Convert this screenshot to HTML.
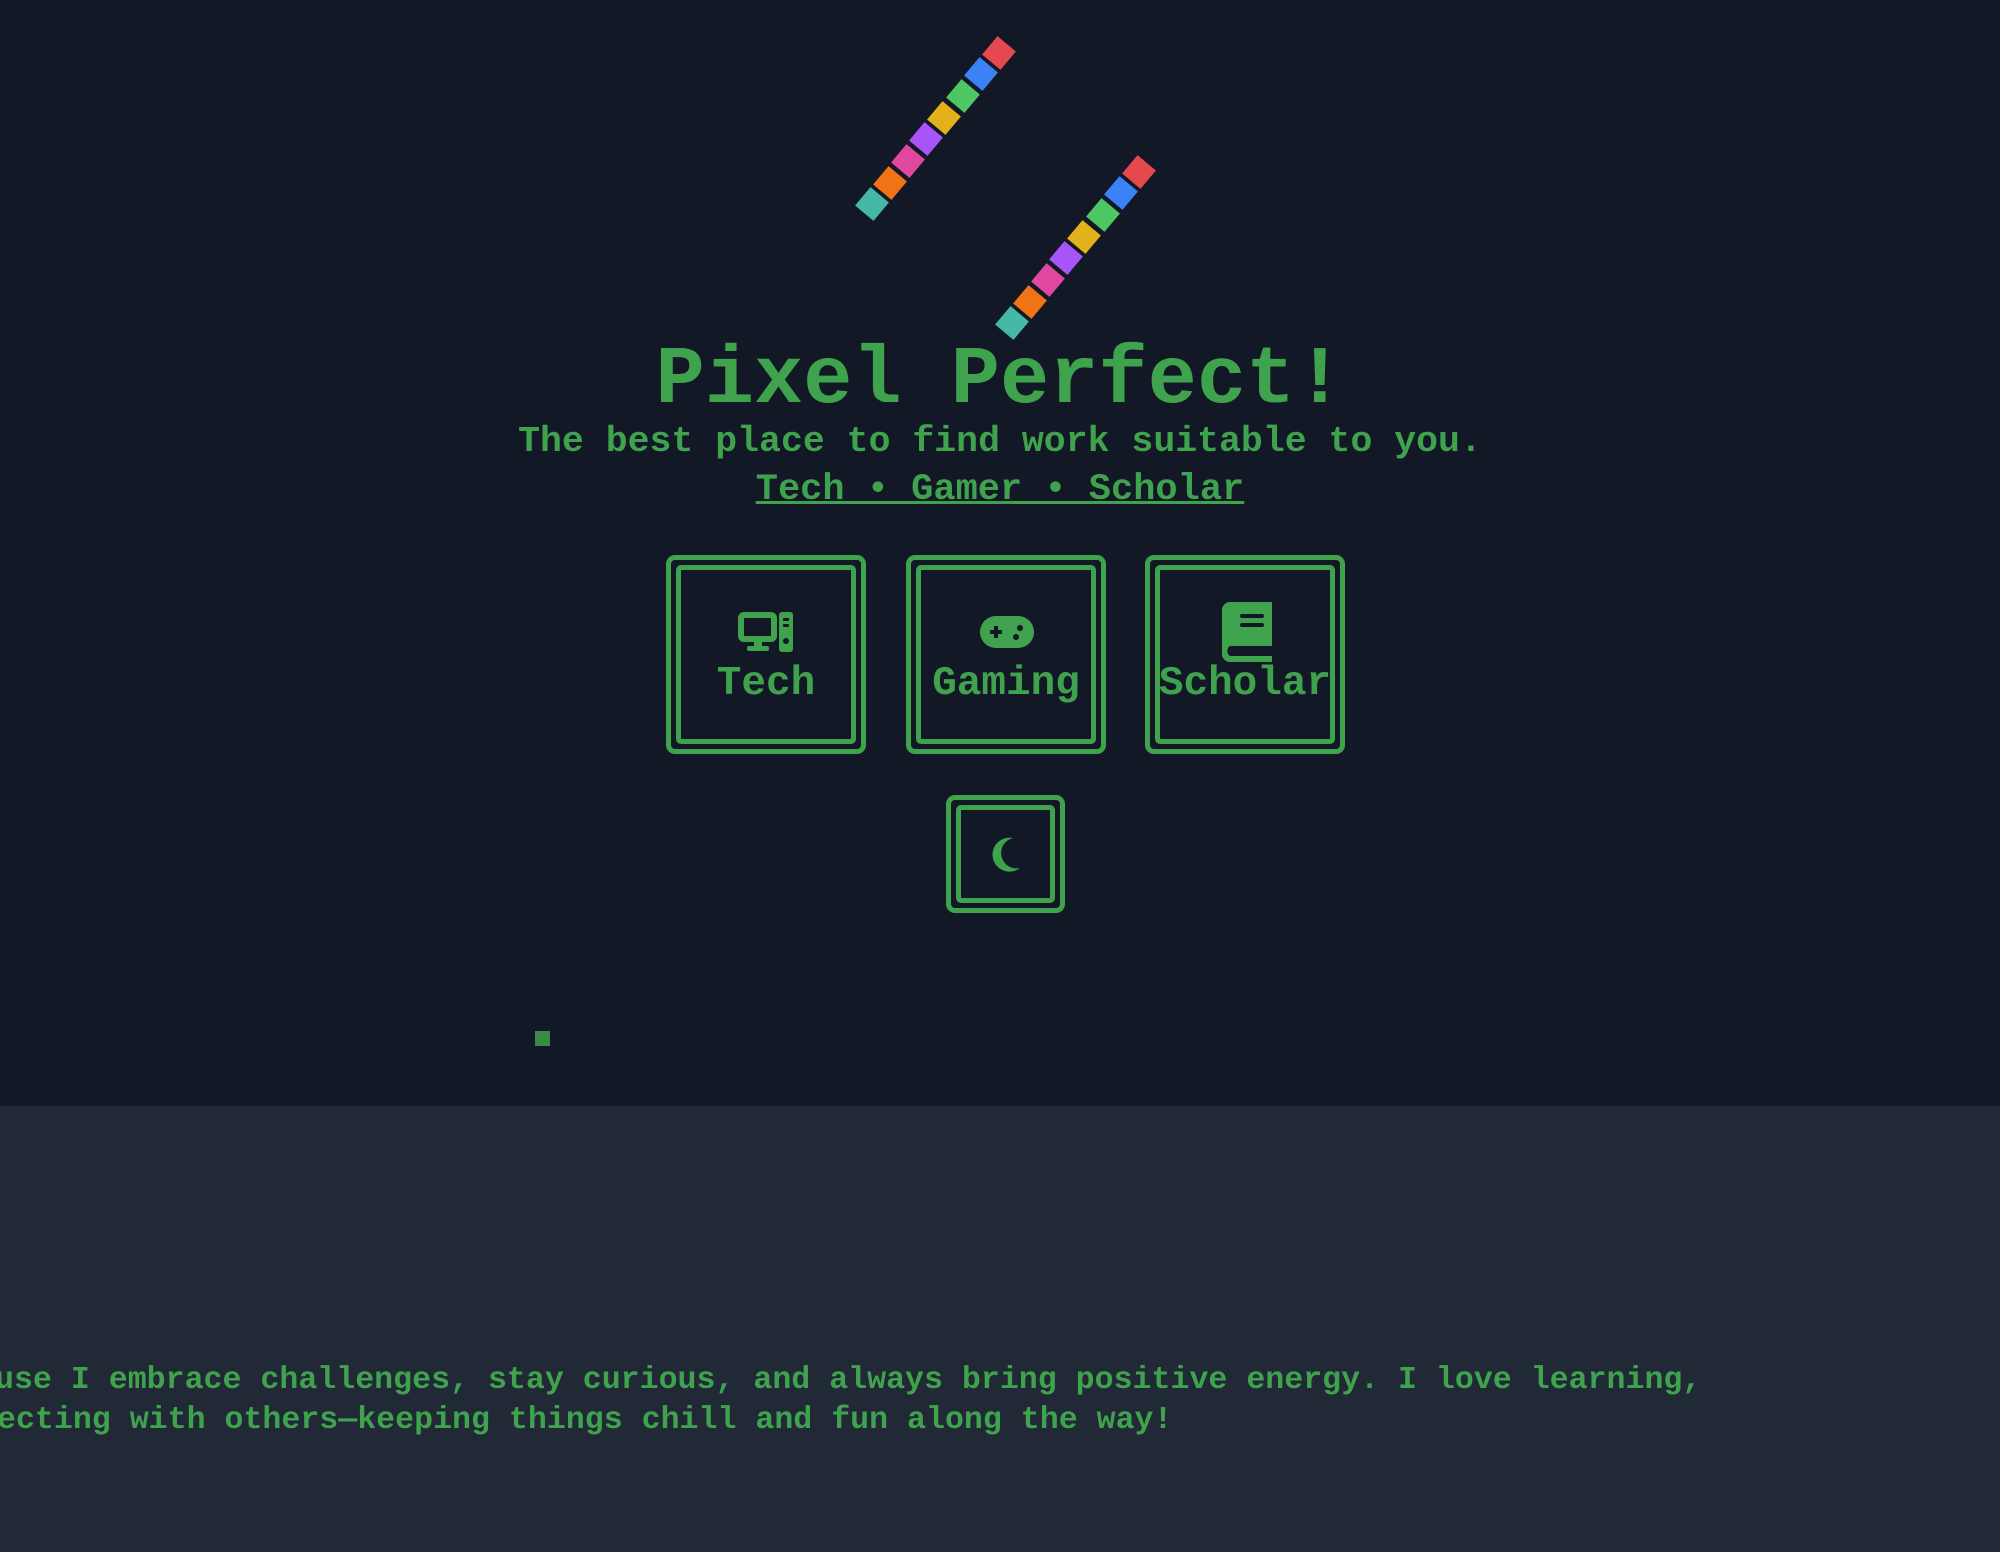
<!DOCTYPE html>
<html><head><meta charset="utf-8"><style>
html,body{margin:0;padding:0;width:2000px;height:1552px;overflow:hidden;background:#121826;font-family:"Liberation Mono",monospace;color:#3fa34d}
.top{position:absolute;left:0;top:0;width:2000px;height:1106px;background:#121826}
.bot{position:absolute;left:0;top:1106px;width:2000px;height:446px;background:#212836}
.c{position:absolute;left:0;width:2000px;text-align:center;white-space:nowrap}
.card{position:absolute;box-sizing:border-box;border:5px solid #3fa34d;border-radius:9px}
.card .in{position:absolute;left:5px;top:5px;right:5px;bottom:5px;border:5px solid #3fa34d;border-radius:5px}
.lbl{position:absolute;left:0;right:0;top:104px;text-align:center;font-size:41px;font-weight:bold;line-height:40px}
.bt{position:absolute;white-space:nowrap;font-size:31.6px;font-weight:bold;line-height:40px}
</style></head><body>
<div class="top"></div><div class="bot"></div>
<svg style="position:absolute;left:0;top:0" width="2000" height="400">
<g id="s1">
<rect x="-12" y="-12" width="24" height="24" fill="#e5484d" transform="translate(999,53) rotate(40)"/>
<rect x="-12" y="-12" width="24" height="24" fill="#3b82f6" transform="translate(981,74) rotate(40)"/>
<rect x="-12" y="-12" width="24" height="24" fill="#4cc764" transform="translate(963,96) rotate(40)"/>
<rect x="-12" y="-12" width="24" height="24" fill="#e3b21a" transform="translate(944,118) rotate(40)"/>
<rect x="-12" y="-12" width="24" height="24" fill="#a855f7" transform="translate(926,139) rotate(40)"/>
<rect x="-12" y="-12" width="24" height="24" fill="#e0479e" transform="translate(908,161) rotate(40)"/>
<rect x="-12" y="-12" width="24" height="24" fill="#f07316" transform="translate(890,183) rotate(40)"/>
<rect x="-12" y="-12" width="24" height="24" fill="#45b8a8" transform="translate(872,204) rotate(40)"/>
</g>
<use href="#s1" transform="translate(140,119)"/>
</svg>
<div class="c" style="top:338px;font-size:82px;font-weight:bold;line-height:86px">Pixel Perfect!</div>
<div class="c" style="top:420px;font-size:36.5px;font-weight:bold;line-height:44px">The best place to find work suitable to you.</div>
<div class="c" style="top:468px;font-size:37px;font-weight:bold;line-height:44px;text-decoration:underline">Tech • Gamer • Scholar</div>

<div class="card" style="left:666px;top:555px;width:200px;height:199px"><div class="in"></div>
<svg style="position:absolute;left:66px;top:51px" width="60" height="45" viewBox="0 0 60 45">
<rect x="4" y="4" width="33" height="24" rx="3" fill="none" stroke="#3fa34d" stroke-width="6"/>
<rect x="17" y="30" width="8" height="6" fill="#3fa34d"/>
<rect x="10" y="35" width="22" height="5" rx="2" fill="#3fa34d"/>
<rect x="42" y="1" width="14" height="40" rx="3" fill="#3fa34d"/>
<rect x="46" y="7" width="6" height="3" rx="1" fill="#121826"/>
<rect x="46" y="13" width="6" height="3" rx="1" fill="#121826"/>
<circle cx="49" cy="30" r="3" fill="#121826"/>
</svg>
<div class="lbl">Tech</div></div>

<div class="card" style="left:906px;top:555px;width:200px;height:199px"><div class="in"></div>
<svg style="position:absolute;left:67px;top:52px" width="58" height="40" viewBox="0 0 58 40">
<rect x="2" y="4" width="54" height="32" rx="16" fill="#3fa34d"/>
<rect x="12" y="18" width="12" height="4" fill="#121826"/><rect x="16" y="14" width="4" height="12" fill="#121826"/>
<circle cx="42" cy="16" r="3" fill="#121826"/><circle cx="38" cy="25" r="3" fill="#121826"/>
</svg>
<div class="lbl">Gaming</div></div>

<div class="card" style="left:1145px;top:555px;width:200px;height:199px"><div class="in"></div>
<svg style="position:absolute;left:70px;top:40px" width="56" height="62" viewBox="0 0 56 62">
<path d="M10 2 H52 V46 H10 a6 6 0 0 0 0 10 H52 V62 H10 a8 8 0 0 1 -8 -8 V10 a8 8 0 0 1 8 -8Z" fill="#3fa34d"/>
<rect x="20" y="14" width="24" height="4" rx="2" fill="#121826"/>
<rect x="20" y="23" width="24" height="4" rx="2" fill="#121826"/>
</svg>
<div class="lbl">Scholar</div></div>

<div class="card" style="left:946px;top:795px;width:119px;height:118px"><div class="in"></div>
<svg style="position:absolute;left:40px;top:35px" width="36" height="40" viewBox="0 0 36 40">
<path d="M22 3 A17 17 0 1 0 29 33 A13 13 0 0 1 22 3Z" fill="#3fa34d"/>
</svg></div>

<div style="position:absolute;left:535px;top:1031px;width:15px;height:15px;background:#3a8a4a"></div>

<div class="bt" style="left:-5px;top:1361px">use I embrace challenges, stay curious, and always bring positive energy. I love learning,</div>
<div class="bt" style="left:-3px;top:1401px">ecting with others—keeping things chill and fun along the way!</div>
</body></html>
